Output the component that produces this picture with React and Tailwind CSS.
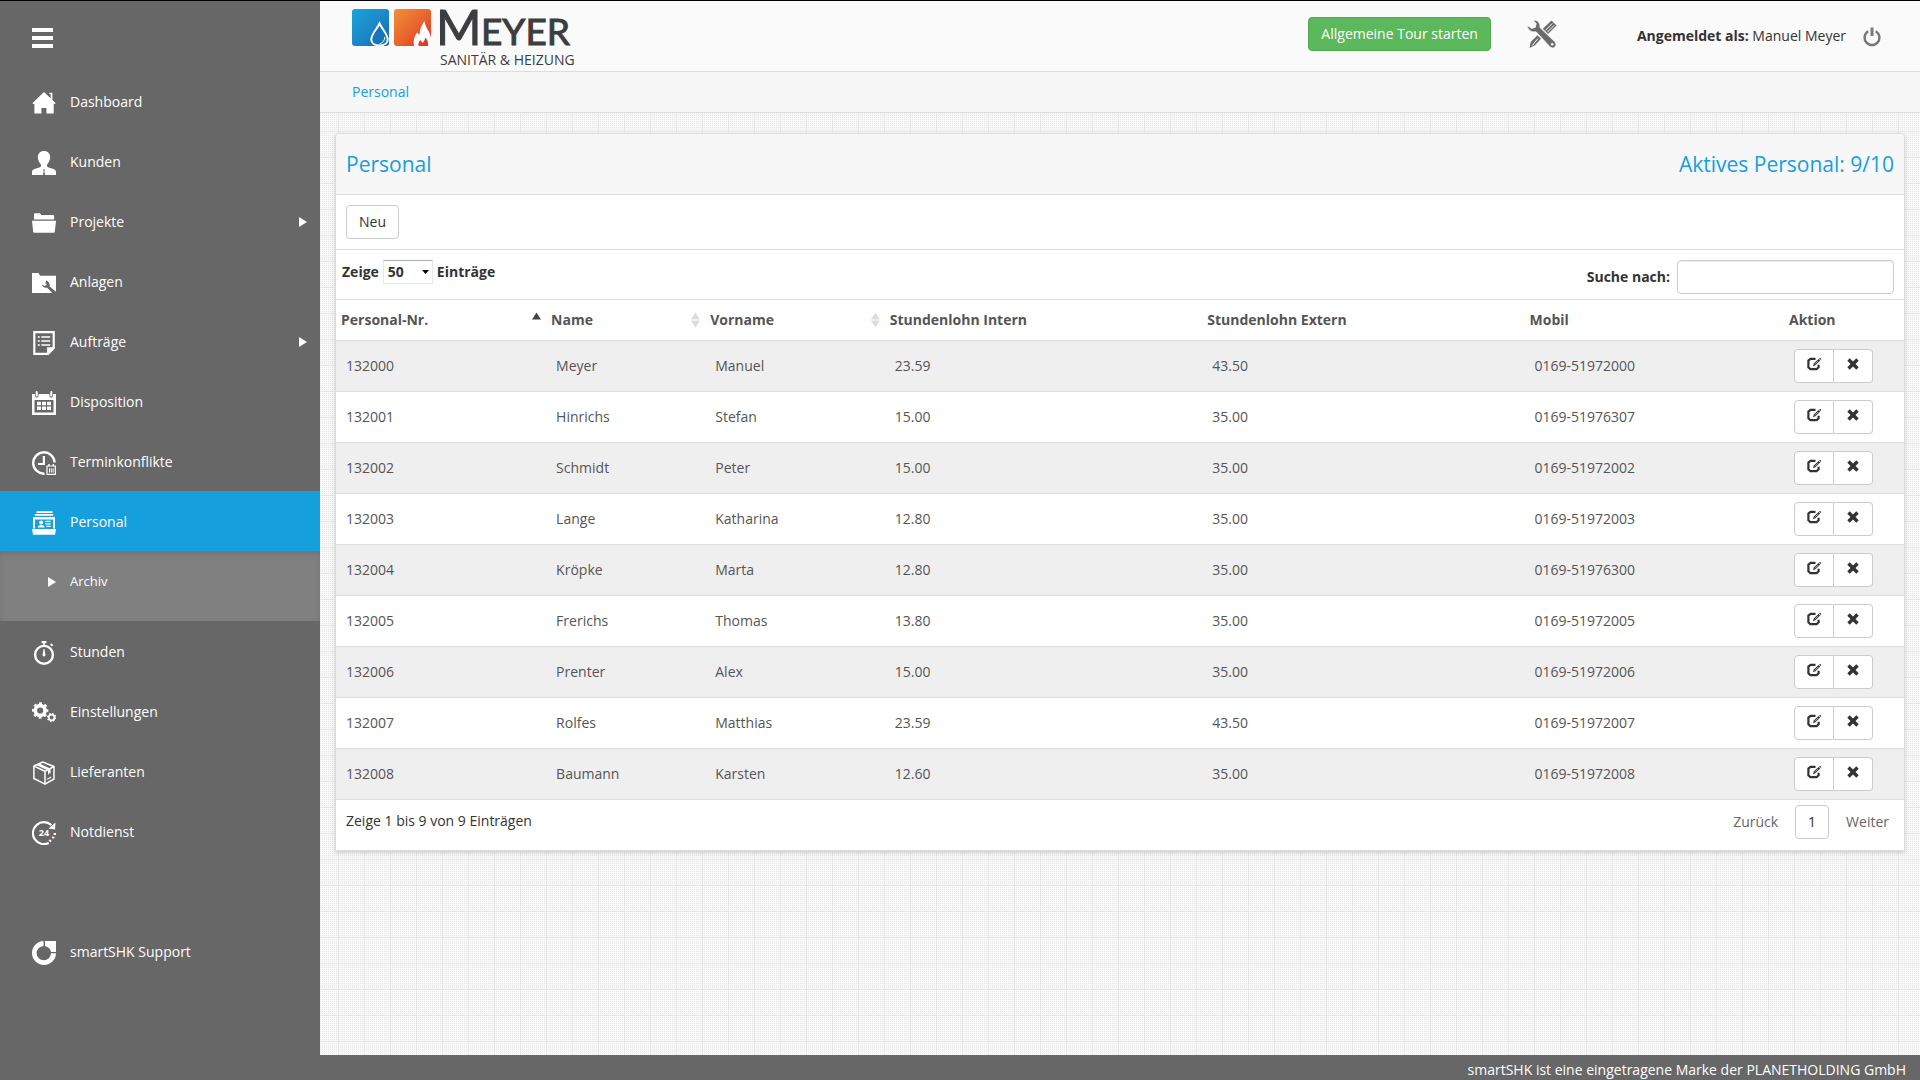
import React from "react";

const people = [
  ["132000", "Meyer", "Manuel", "23.59", "43.50", "0169-51972000"],
  ["132001", "Hinrichs", "Stefan", "15.00", "35.00", "0169-51976307"],
  ["132002", "Schmidt", "Peter", "15.00", "35.00", "0169-51972002"],
  ["132003", "Lange", "Katharina", "12.80", "35.00", "0169-51972003"],
  ["132004", "Kröpke", "Marta", "12.80", "35.00", "0169-51976300"],
  ["132005", "Frerichs", "Thomas", "13.80", "35.00", "0169-51972005"],
  ["132006", "Prenter", "Alex", "15.00", "35.00", "0169-51972006"],
  ["132007", "Rolfes", "Matthias", "23.59", "43.50", "0169-51972007"],
  ["132008", "Baumann", "Karsten", "12.60", "35.00", "0169-51972008"],
];

function Icon({ children }) {
  return (
    <svg viewBox="0 0 24 24" className="h-6 w-6 shrink-0" fill="#fff" aria-hidden="true">
      {children}
    </svg>
  );
}

const HomeIcon = () => (
  <Icon>
    <path d="M12 1 0.4 12.2l1.3 1L2.4 12.6V22.5H9.4V17h5v5.5h7.3V12.6l.7.6 1.2-1L20.4 9V1.8h-3V3l1.2.2.2 4.2z" />
  </Icon>
);

const UserIcon = () => (
  <Icon>
    <path d="M12 0c-3.9 0-6.2 2.7-6.2 6.4 0 2.400 1.600 5.100 3 7 .5 1 .3 2.300-.8 2.900L2.500 18.100C.8 18.700 0 19.600 0 21.200V24h11l.8-4-1-1.600h2.400l-.9 1.600.9 4H24v-2.800c0-1.600-.8-2.500-2.500-3.100L16 16.300c-1.100-.6-1.300-1.900-.8-2.900 1.400-1.900 3-4.600 3-7C18.200 2.700 15.900 0 12 0z" />
  </Icon>
);

const FolderIcon = () => (
  <Icon>
    <path d="M2 8.600V3.400Q2 2.300 3 2.300h4.600q.7 0 1 .7l.5 1h12q1 0 1 1v3.600zM0 9.800h24l-1.200 10.900q-.1 1.100-1.200 1.100H2.400q-1.100 0-1.200-1.100z" />
  </Icon>
);

const FolderWrenchIcon = () => (
  <Icon>
    <path d="M0 2h6.500l1.500 2.800h16v17.200H0z" />
    <path
      d="M14.200 9.600l-.8 2.600 1.600 1.500-2.400 1.300-2.700-1.700c.4 2.600 2.700 4 5 3.300l6.300 6.300L24 24v-3.200l-6.300-5.300c.5-2.700-1.200-5.200-3.500-5.900z"
      fill="#676767"
    />
  </Icon>
);

const OrdersIcon = () => (
  <Icon>
    <path d="M1.200 0h21.600v17.500L16.500 24H1.200zM3.400 2.200v19.600h11.700v-5.600h5.500V2.200z" fillRule="evenodd" />
    <path d="M5.800 5.200h2v1.600h-2zM9.300 5.200h8.900v1.600H9.300zM5.800 9.200h2v1.600h-2zM9.300 9.200h8.900v1.600H9.300zM5.800 13.200h2v1.600h-2zM9.300 13.200h8.900v1.600H9.300z" />
  </Icon>
);

const CalendarIcon = () => (
  <Icon>
    <path d="M0 3h3v2q0 1.600 1.700 1.600T6.500 5V3h11v2q0 1.600 1.800 1.600T21 5V3h3v21H0zM2.500 9v12.600h19V9z" fillRule="evenodd" />
    <rect x="3.700" y="0" width="2" height="5.500" rx="1" />
    <rect x="18.300" y="0" width="2" height="5.500" rx="1" />
    <path d="M5 10.700h4v3.600H5zM10 10.700h4v3.600h-4zM15 10.700h4v3.600h-4zM5 15.500h4v3.600H5zM10 15.500h4v3.600h-4zM15 15.500h4v3.600h-4z" />
  </Icon>
);

const ClockIcon = () => (
  <Icon>
    <path d="M12.500 22.700A10.700 10.700 0 1 1 22.600 11.500" fill="none" stroke="#fff" strokeWidth="2.400" />
    <path d="M11.900 5v8H6" fill="none" stroke="#fff" strokeWidth="2.200" />
    <path d="M15 15h8.300v8.300H15z" fill="none" stroke="#fff" strokeWidth="1.200" />
    <path d="M16.200 13h1.500v2.200h-1.500zM20.600 13h1.500v2.200h-1.500zM17 17.300h1v4.200h-1zM18.800 17.300h1v4.200h-1zM20.600 17.300h1v4.200h-1z" />
  </Icon>
);

const StaffIcon = () => (
  <Icon>
    <path d="M4.500 .3h16v1.600h-16zM2.800 3h18.400v1.800H2.800zM1 6h22v11.500h-2V8.500H3v9H1zM0 18h24l-1 5.700H1z" />
    <circle cx="9.200" cy="11.500" r="2" />
    <path d="M5.700 16.500q0-1.800 2.500-2.500h2q2.500.7 2.500 2.500zM13.300 9.800h5.400v1.200h-5.400zM13.300 12.200h5.400v1.200h-5.400zM14.300 14.700h4.400v1.200h-4.400z" />
  </Icon>
);

const StopwatchIcon = () => (
  <Icon>
    <circle cx="12" cy="13.800" r="8.900" fill="none" stroke="#fff" strokeWidth="2.400" />
    <path d="M9.600 0h4.800v2.200H9.600zM11.200 2h1.600v2h-1.600zM18 3.600l1.300-1.300 2 2-1.300 1.300zM11.600 8h.9l.9 5.600q.4 2-1.400 2t-1.400-2z" />
  </Icon>
);

const GearsIcon = () => (
  <Icon>
    <circle cx="8.200" cy="9.500" r="4.900" fill="none" stroke="#fff" strokeWidth="3.600" />
    <circle cx="8.200" cy="9.500" r="7.200" fill="none" stroke="#fff" strokeWidth="2" strokeDasharray="2.830 2.830" strokeDashoffset="1.400" />
    <circle cx="19.600" cy="16.500" r="2.800" fill="none" stroke="#fff" strokeWidth="1.700" />
    <circle cx="19.600" cy="16.500" r="4" fill="none" stroke="#fff" strokeWidth="1.300" strokeDasharray="1.570 1.570" />
  </Icon>
);

const BoxIcon = () => (
  <Icon>
    <path
      d="M10.800 1 1.900 5v12.500L13 23.200l9-5.200V5.500zM1.900 5 13 10.300l9-4.800M13 10.300v12.900"
      fill="none"
      stroke="#fff"
      strokeWidth="1.500"
      strokeLinejoin="round"
    />
    <path d="M4.700 4.200 8 2.700l10.600 5v5.200l-1-1.300-1.600 2.700V9.500zM15.200 17.600l4-2.200v1.400l-4 2.200z" />
  </Icon>
);

const EmergencyIcon = () => (
  <Icon>
    <path d="M16.800 22A11 11 0 1 1 19.300 4" fill="none" stroke="#fff" strokeWidth="2.200" />
    <path d="M23.500 1.500 23 8.500l-6.500-1zM21.600 12h2.400v2h-2.400zM20.400 15.200l2.300.8-.8 1.800-2.200-.8zM18 18.200l1.800 1.700-1.600 1.400-1.600-1.800z" />
    <text x="11.900" y="15.400" textAnchor="middle" fontSize="9" fontWeight="700" fontFamily="Open Sans, sans-serif">
      24
    </text>
  </Icon>
);

const SupportIcon = () => (
  <Icon>
    <path d="M11.500 0A12 12 0 1 0 24 12.300h-5a7.200 7.200 0 1 1-7.500-7.400zM13 0h11v11h-5q-.6-4.600-6-6z" />
  </Icon>
);

function CaretRight() {
  return (
    <svg viewBox="0 0 8 10" className="h-[10px] w-2 shrink-0" fill="#fff" aria-hidden="true">
      <path d="M0 0 8 5 0 10z" />
    </svg>
  );
}

function NavItem({ icon, label, caret, active }) {
  return (
    <li>
      <a
        href="#"
        className={
          "flex h-[60px] items-center pt-0.5 pr-[13px] pl-8 text-sm text-white " + (active ? "bg-[#159fdc]" : "")
        }
      >
        <span className="pt-0.5">{icon}</span>
        <span className="ml-3.5 flex-1">{label}</span>
        {caret && <CaretRight />}
      </a>
    </li>
  );
}

function Sidebar() {
  return (
    <aside className="flex w-80 shrink-0 flex-col bg-[#676767]">
      <div className="flex h-[70px] items-start pt-[27px] pl-8">
        <button type="button" aria-label="Menü" className="flex flex-col gap-1">
          <span className="block h-1 w-[21px] bg-white" />
          <span className="block h-1 w-[21px] bg-white" />
          <span className="block h-1 w-[21px] bg-white" />
        </button>
      </div>
      <nav>
        <ul>
          <NavItem icon={<HomeIcon />} label="Dashboard" />
          <NavItem icon={<UserIcon />} label="Kunden" />
          <NavItem icon={<FolderIcon />} label="Projekte" caret />
          <NavItem icon={<FolderWrenchIcon />} label="Anlagen" />
          <NavItem icon={<OrdersIcon />} label="Aufträge" caret />
          <NavItem icon={<CalendarIcon />} label="Disposition" />
          <NavItem icon={<ClockIcon />} label="Terminkonflikte" />
          <NavItem icon={<StaffIcon />} label="Personal" active />
          <li className="bg-[#808080] pb-2.5 shadow-[inset_0_3px_8px_-2px_rgba(0,0,0,0.15)]">
            <a href="#" className="flex h-[60px] items-center pt-0.5 pl-12 text-[13px] text-white">
              <CaretRight />
              <span className="ml-3.5">Archiv</span>
            </a>
          </li>
          <NavItem icon={<StopwatchIcon />} label="Stunden" />
          <NavItem icon={<GearsIcon />} label="Einstellungen" />
          <NavItem icon={<BoxIcon />} label="Lieferanten" />
          <NavItem icon={<EmergencyIcon />} label="Notdienst" />
        </ul>
        <ul className="mt-[60px]">
          <NavItem icon={<SupportIcon />} label="smartSHK Support" />
        </ul>
      </nav>
    </aside>
  );
}

function Logo() {
  return (
    <svg viewBox="0 0 222 66" className="h-[66px] w-[222px] overflow-visible" role="img" aria-label="Meyer Sanitär & Heizung">
      <defs>
        <linearGradient id="water" x1="0" y1="0" x2="1" y2="1">
          <stop offset="0" stopColor="#1ba3dc" />
          <stop offset="0.550" stopColor="#1b87c6" />
          <stop offset="1" stopColor="#1462a8" />
        </linearGradient>
        <linearGradient id="fire" x1="0" y1="0" x2="1" y2="1">
          <stop offset="0" stopColor="#f29036" />
          <stop offset="0.550" stopColor="#e8622c" />
          <stop offset="1" stopColor="#e02a28" />
        </linearGradient>
      </defs>
      <rect x="0" y="4" width="37" height="37" rx="3" fill="url(#water)" />
      <path
        d="M27.500 18.500C25 24 19.300 29 19.300 34.500c0 3.500 3 6 8.200 6s8.200-2.500 8.200-6C35.700 29 30 24 27.500 18.500z"
        fill="#1576ba"
        stroke="#fff"
        strokeWidth="2"
      />
      <path d="M32.800 32q0 5-5.300 7" fill="none" stroke="#fff" strokeWidth="1" />
      <rect x="42" y="4" width="37" height="37" rx="3" fill="url(#fire)" />
      <path
        d="M62 41c-1-5 0-9 3-13.500l2.500 2.500c0-5 2-10 5-14 .5 7 6.500 11 6.500 18V41h-3c.5-3-.5-6-2.500-8.500-1 2.500-1.500 4-3 5.500-.5-1.500-1.500-2.500-2.500-3-1 2-2 3.500-1.500 6z"
        fill="#fff"
      />
      <g fill="#3c3d3f">
        <g fontFamily="Lato, sans-serif" stroke="#3c3d3f" strokeWidth="1">
          <text x="84" y="40" fontSize="49">
            M
          </text>
          <text x="129" y="40" fontSize="37">
            EYER
          </text>
        </g>
        <text x="88" y="60" fontFamily="Open Sans, sans-serif" fontSize="14">
          SANITÄR &amp; HEIZUNG
        </text>
      </g>
    </svg>
  );
}

function ToolsIcon() {
  return (
    <svg viewBox="0 0 30 28" className="h-7 w-[30px]" fill="#6b6b6b" aria-hidden="true">
      <path d="M24.500 0.500 29.500 5.500 21 14l-5.200-5.200z" />
      <path d="M25.300 3.500l-7 7M27.200 5.300l-7 7" stroke="#fafafa" strokeWidth="1" />
      <path d="M10.500 15.200 14 18.700 8 25.300 2.500 28l1.200-6z" />
      <path d="M11 18.500 5.200 25.500" stroke="#fafafa" strokeWidth="1" />
      <path
        d="M6 .2c4.500-.6 7.500 2.500 7 7.300L27.800 21.800c1.600 1.800 1.400 3.900.1 5.200-1.400 1.300-3.500 1.300-5-.2L9 11.700c-4.500 1-8.300-1.700-8.700-6.200l4.500 3 3.600-1.200.8-3.700z"
        stroke="#fafafa"
        strokeWidth="0.800"
      />
      <circle cx="25.200" cy="24.200" r="1.300" fill="#fafafa" />
    </svg>
  );
}

function PowerIcon() {
  return (
    <svg viewBox="0 0 18 20" className="h-5 w-[18px]" fill="none" stroke="#777" strokeWidth="2.400" aria-hidden="true">
      <path d="M5.300 4.200a7.400 7.400 0 1 0 7.400 0" />
      <path d="M9 .5v8.500" strokeWidth="3" />
    </svg>
  );
}

function TopBar() {
  return (
    <header className="flex h-[71px] items-start border-b border-[#ddd] bg-[#fafafa] pr-[39px] pl-8">
      <div className="flex-1 pt-1">
        <a href="#" className="inline-block">
          <Logo />
        </a>
      </div>
      <button
        type="button"
        className="mt-4 h-[34px] rounded border border-[#4cae4c] bg-[#5cb85c] px-3 text-sm text-white"
      >
        Allgemeine Tour starten
      </button>
      <button type="button" aria-label="Werkzeuge" className="mt-[19px] ml-9">
        <ToolsIcon />
      </button>
      <div className="mt-[25px] ml-20 text-sm text-[#333]">
        <b>Angemeldet als:</b> Manuel Meyer
      </div>
      <button type="button" aria-label="Abmelden" className="mt-[26px] ml-[17px]">
        <PowerIcon />
      </button>
    </header>
  );
}

function SortIcon({ both }) {
  return (
    <svg viewBox="0 0 9 16" className="h-4 w-[9px]" aria-hidden="true">
      <path d="M4.500 0.500 9 7.500H0z" fill={both ? "#ddd" : "#444"} />
      {both && <path d="M0 8.500h9l-4.500 7z" fill="#ddd" />}
    </svg>
  );
}

function HeadCell({ label, sort, width }) {
  return (
    <th scope="col" className={"h-[41px] border-b border-[#ddd] px-[5px] text-left " + width}>
      <span className="flex items-center justify-between">
        {label}
        {sort && <SortIcon both={sort === "both"} />}
      </span>
    </th>
  );
}

function EditIcon() {
  return (
    <svg viewBox="0 0 15 14" className="h-3.5 w-[15px]" fill="none" stroke="#333" aria-hidden="true">
      <path d="M8.500 1.900H3.600L1.400 3.600v6.600l2 2h6.200l2-2V7.800" strokeWidth="2.200" />
      <path d="M6 9.200l.8-2.600 4.800-4.700 1.600 1.600-4.800 4.800z" fill="#333" stroke="none" />
      <path d="M12.200 1.400 13 .7l1.400 1.400-.8.800z" fill="#333" stroke="none" />
      <path d="M7.800 7.400l3.400-3.400" stroke="#fff" strokeWidth="0.600" />
    </svg>
  );
}

function RemoveIcon() {
  return (
    <svg viewBox="0 0 12 12" className="h-3 w-3" fill="#333" aria-hidden="true">
      <path d="M2.700.3 6 3.500 9.300.3l2.400 2.400L8.500 6l3.200 3.300-2.400 2.400L6 8.500l-3.300 3.200L.3 9.300 3.500 6 .3 2.700z" />
    </svg>
  );
}

function PersonTable() {
  return (
    <table className="w-full table-fixed border-separate border-spacing-0 text-sm text-[#555]">
      <thead>
        <tr>
          <HeadCell label="Personal-Nr." sort="asc" width="w-[13.400%]" />
          <HeadCell label="Name" sort="both" width="w-[10.150%]" />
          <HeadCell label="Vorname" sort="both" width="w-[11.450%]" />
          <HeadCell label="Stundenlohn Intern" width="w-[20.250%]" />
          <HeadCell label="Stundenlohn Extern" width="w-[20.550%]" />
          <HeadCell label="Mobil" width="w-[16.550%]" />
          <HeadCell label="Aktion" width="w-[7.650%]" />
        </tr>
      </thead>
      <tbody>
        {people.map((row) => (
          <tr key={row[0]} className="odd:bg-[#efefef]">
            {row.map((cell, i) => (
              <td key={i} className="h-[51px] border-b border-[#ddd] px-2.5">
                {cell}
              </td>
            ))}
            <td className="border-b border-[#ddd] px-2.5">
              <div className="flex">
                <button
                  type="button"
                  aria-label={"Bearbeiten " + row[0]}
                  className="flex h-[34px] w-10 items-center justify-center rounded-l border border-[#ccc] bg-white pb-1"
                >
                  <EditIcon />
                </button>
                <button
                  type="button"
                  aria-label={"Löschen " + row[0]}
                  className="flex h-[34px] w-[39px] items-center justify-center rounded-r border border-l-0 border-[#ccc] bg-white pb-1"
                >
                  <RemoveIcon />
                </button>
              </div>
            </td>
          </tr>
        ))}
      </tbody>
    </table>
  );
}

function Panel() {
  return (
    <section className="rounded-t border border-[#ddd] bg-white shadow-[0_2px_4px_rgba(0,0,0,0.15)]">
      <div className="flex h-[61px] items-center justify-between rounded-t border-b border-[#ddd] bg-[#f7f7f7] px-2.5 pt-0.5 text-[21px] text-[#159fdc]">
        <h1>Personal</h1>
        <span>Aktives Personal: 9/10</span>
      </div>
      <div className="flex border-b border-[#ddd] p-2.5">
        <button type="button" className="h-[34px] rounded border border-[#ccc] bg-white px-3 text-sm text-[#333]">
          Neu
        </button>
      </div>
      <div className="flex items-start justify-between border-b border-[#ddd] pt-2.5 pr-2.5 pb-[5px] pl-1.5 text-sm font-bold text-[#333]">
        <label className="flex items-center gap-1">
          Zeige
          <span className="relative flex items-center">
            <select
              defaultValue="50"
              className="h-6 w-[50px] appearance-none border border-[#e3e9ef] border-t-[#abadb3] bg-white pl-1 font-bold"
            >
              <option>10</option>
              <option>25</option>
              <option>50</option>
              <option>100</option>
            </select>
            <svg viewBox="0 0 7 4" className="pointer-events-none absolute right-1 h-1 w-[7px]" aria-hidden="true">
              <path d="M0 0h7L3.500 4z" fill="#000" />
            </svg>
          </span>
          Einträge
        </label>
        <label className="flex items-center gap-[7px]">
          Suche nach:
          <input
            type="text"
            className="h-[34px] w-[217px] rounded border border-[#ccc] bg-white px-3 font-normal shadow-[inset_0_1px_1px_rgba(0,0,0,0.075)]"
          />
        </label>
      </div>
      <PersonTable />
      <div className="flex h-[50px] items-start justify-between pr-[15px] pl-2.5 text-sm text-[#333]">
        <p className="pt-[11px]">Zeige 1 bis 9 von 9 Einträgen</p>
        <div className="flex items-center pt-[5px] text-[#666]">
          <button type="button">Zurück</button>
          <button type="button" className="mx-[17px] h-[34px] w-[34px] rounded border border-[#ccc] bg-white text-[#333]">
            1
          </button>
          <button type="button">Weiter</button>
        </div>
      </div>
    </section>
  );
}

export default function App() {
  return (
    <div className="flex min-h-screen flex-col border-t border-black bg-[#676767] font-['Open_Sans',sans-serif]">
      <div className="flex flex-1">
        <Sidebar />
        <div className="flex min-w-0 flex-1 flex-col">
          <TopBar />
          <nav className="flex h-[41px] items-center border-b border-[#ddd] bg-[#f7f7f7] px-8 text-sm">
            <a href="#" className="text-[#159fdc]">
              Personal
            </a>
          </nav>
          <main className="flex-1 bg-[#f8f8f8] bg-[linear-gradient(to_right,#e7e7e7_1px,transparent_1px),linear-gradient(to_bottom,#e7e7e7_1px,transparent_1px),conic-gradient(from_270deg_at_1px_1px,#e8e8e8_90deg,transparent_0)] bg-size-[26px_26px,26px_26px,2px_2px] bg-position-[18px_18px] px-[15px] pt-5 pb-5">
            <Panel />
          </main>
        </div>
      </div>
      <footer className="flex h-[25px] items-center justify-end bg-[#676767] pt-1 pr-3.5 text-sm text-white">
        smartSHK ist eine eingetragene Marke der PLANETHOLDING GmbH
      </footer>
    </div>
  );
}
